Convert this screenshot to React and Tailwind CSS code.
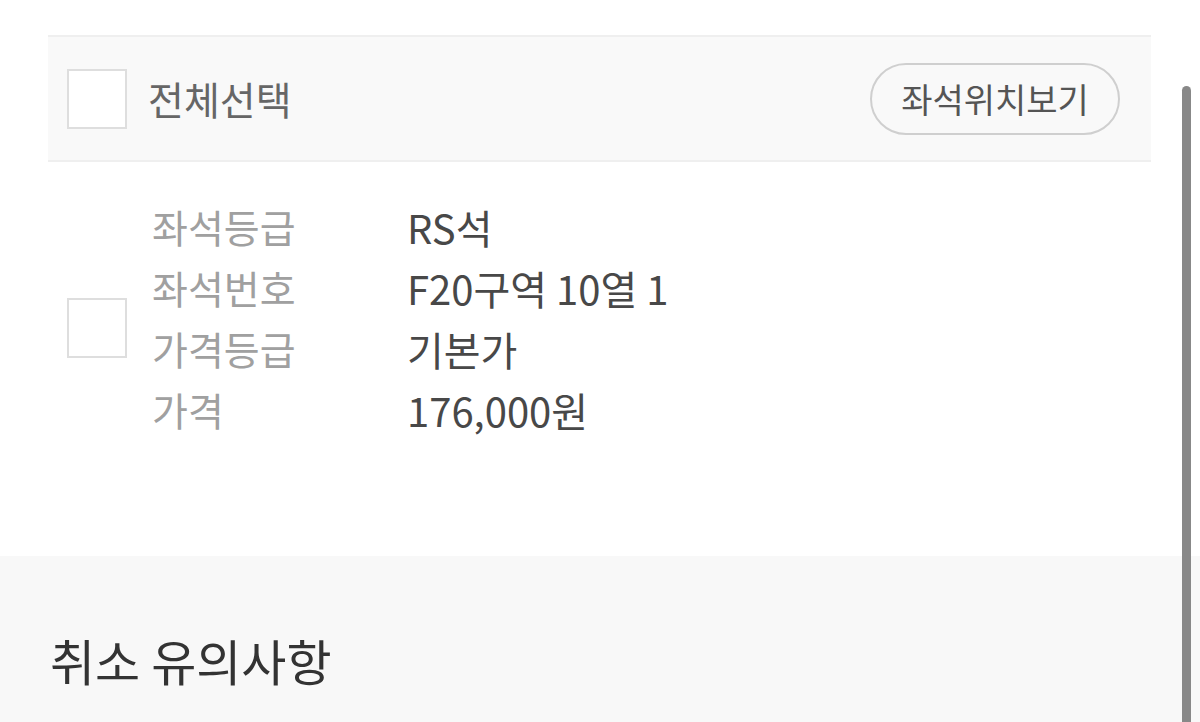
const FONT = { fontFamily: '"Noto Sans CJK KR", "Noto Sans", sans-serif' };

const ROWS = [
  { label: '좌석등급', value: 'RS석' },
  { label: '좌석번호', value: 'F20구역 10열 1' },
  { label: '가격등급', value: '기본가' },
  { label: '가격', value: '176,000원' },
];

function Checkbox({ className = '' }) {
  return <div className={`w-[60px] h-[60px] shrink-0 bg-white border-2 border-[#dedede] ${className}`} />;
}

export default function App() {
  return (
    <div className="relative w-[1200px] h-[722px] overflow-hidden bg-white" style={FONT}>
      <div className="pt-[35px] pl-[48px] pr-[49px]">
        {/* 전체선택 */}
        <div className="h-[127px] flex items-center justify-between bg-[#f9f9f9] border-y-2 border-[#efefef] pl-[19px] pr-[31px]">
          <div className="flex items-center gap-[21px]">
            <Checkbox />
            <span className="text-[39px] leading-none text-[#666]">전체선택</span>
          </div>
          <button className="h-[72px] w-[250px] rounded-full border-2 border-[#cfcfcf] text-[34px] text-[#555] leading-none">
            좌석위치보기
          </button>
        </div>

        {/* 좌석 정보 */}
        <div className="h-[394px] flex items-start pl-[19px] pt-[34px]">
          <Checkbox className="mt-[102px]" />
          <div className="ml-[25px]">
            {ROWS.map((r) => (
              <div key={r.label} className="flex h-[61px] items-center leading-none">
                <span className="w-[255px] text-[39px] text-[#a0a0a0]">{r.label}</span>
                <span className="text-[40px] text-[#484848]">{r.value}</span>
              </div>
            ))}
          </div>
        </div>
      </div>

      {/* 취소 유의사항 */}
      <div className="bg-[#f8f8f8] h-[170px] px-[50px] pt-[79px]">
        <h2 className="text-[49px] leading-none text-[#333] font-normal">취소 유의사항</h2>
      </div>

      {/* scrollbar */}
      <div className="absolute left-[1182px] top-[86px] w-[9px] h-[700px] rounded-full bg-[#888]" />
    </div>
  );
}
